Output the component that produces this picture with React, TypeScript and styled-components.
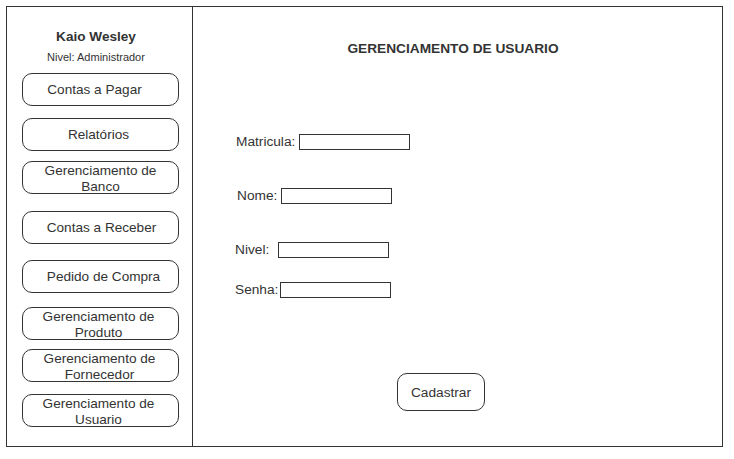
import React from "react";
import styled, { createGlobalStyle } from "styled-components";

const Global = createGlobalStyle`
  html, body { margin: 0; padding: 0; background: #ffffff; }
  body { font-family: "Liberation Sans", Arial, sans-serif; color: #333333; }
  * { box-sizing: border-box; }
`;

const Frame = styled.div`
  margin: 6px 0 0 6px;
  width: 717px;
  height: 441px;
  border: 1px solid #333333;
  display: flex;
`;

const Sidebar = styled.nav`
  width: 186px;
  border-right: 1px solid #333333;
  display: flex;
  flex-direction: column;
  padding: 22px 0 0 15px;
`;

const UserName = styled.div`
  width: 157px;
  padding-right: 9px;
  text-align: center;
  font-size: 13.6px;
  font-weight: bold;
  line-height: 16px;
  color: #333333;
`;

const UserRole = styled.div`
  width: 157px;
  padding-right: 9px;
  margin-top: 5px;
  text-align: center;
  font-size: 11px;
  line-height: 14px;
  color: #333333;
`;

const NavButton = styled.div<{ $top: number; $shift: number; $multi: boolean }>`
  margin-top: ${(p) => p.$top}px;
  width: 157px;
  height: 33px;
  border: 1px solid #333333;
  border-radius: 10px;
  display: flex;
  align-items: center;
  justify-content: center;
  text-align: center;
  font-size: 13.6px;
  line-height: 16px;
  color: #333333;
  padding: ${(p) => (p.$multi ? 3 : 0)}px ${(p) => 6 - p.$shift}px 0 ${(p) => 6 + p.$shift}px;
`;

const Main = styled.main`
  flex: 1;
  display: flex;
  flex-direction: column;
  padding-top: 34px;
`;

const Title = styled.h1`
  margin: 0;
  padding-right: 9px;
  text-align: center;
  font-size: 13.7px;
  font-weight: bold;
  line-height: 16px;
  color: #333333;
`;

const FieldRow = styled.div<{ $top: number; $left: number }>`
  margin-top: ${(p) => p.$top}px;
  padding-left: ${(p) => p.$left}px;
  display: flex;
  align-items: center;
  height: 16px;
`;

const Label = styled.span<{ $gap: number }>`
  font-size: 13.7px;
  line-height: 16px;
  color: #333333;
  margin-right: ${(p) => p.$gap}px;
  white-space: pre;
`;

const Input = styled.div`
  width: 111px;
  height: 16px;
  border: 1px solid #333333;
  background: #ffffff;
`;

const SubmitButton = styled.div`
  margin-top: 75px;
  margin-left: 204px;
  width: 88px;
  height: 38px;
  border: 1px solid #333333;
  border-radius: 10px;
  display: flex;
  align-items: center;
  justify-content: center;
  font-size: 13.7px;
  color: #333333;
`;

const navItems: { label: React.ReactNode; top: number; shift: number; multi: boolean }[] = [
  { label: "Contas a Pagar", top: 9, shift: -6, multi: false },
  { label: "Relatórios", top: 12, shift: -2, multi: false },
  { label: <>Gerenciamento de<br />Banco</>, top: 10, shift: 0, multi: true },
  { label: "Contas a Receber", top: 17, shift: 1, multi: false },
  { label: "Pedido de Compra", top: 16, shift: 3, multi: false },
  { label: <>Gerenciamento de<br />Produto</>, top: 14, shift: -2, multi: true },
  { label: <>Gerenciamento de<br />Fornecedor</>, top: 9, shift: -1, multi: true },
  { label: <>Gerenciamento de<br />Usuario</>, top: 12, shift: -2, multi: true },
];

const fields = [
  { label: "Matricula:", top: 77, left: 43, gap: 4 },
  { label: "Nome:", top: 38, left: 44, gap: 4 },
  { label: "Nivel: ", top: 38, left: 42, gap: 5 },
  { label: "Senha:", top: 24, left: 42, gap: 2 },
];

export default function App() {
  return (
    <>
      <Global />
      <Frame>
        <Sidebar>
          <UserName>Kaio Wesley</UserName>
          <UserRole>Nivel: Administrador</UserRole>
          {navItems.map((item, i) => (
            <NavButton key={i} $top={item.top} $shift={item.shift} $multi={item.multi}>
              <span>{item.label}</span>
            </NavButton>
          ))}
        </Sidebar>
        <Main>
          <Title>GERENCIAMENTO DE USUARIO</Title>
          {fields.map((f) => (
            <FieldRow key={f.label} $top={f.top} $left={f.left}>
              <Label $gap={f.gap}>{f.label}</Label>
              <Input />
            </FieldRow>
          ))}
          <SubmitButton>Cadastrar</SubmitButton>
        </Main>
      </Frame>
    </>
  );
}
